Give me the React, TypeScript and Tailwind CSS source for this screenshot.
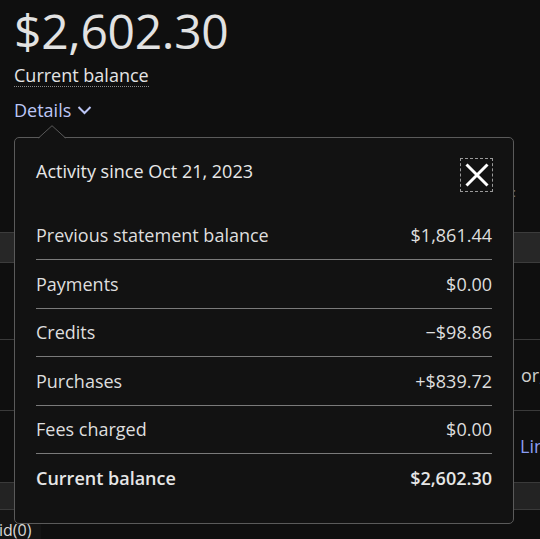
import React from "react";

const rows: { label: string; value: string; bold?: boolean }[] = [
  { label: "Previous statement balance", value: "$1,861.44" },
  { label: "Payments", value: "$0.00" },
  { label: "Credits", value: "\u2212$98.86" },
  { label: "Purchases", value: "+$839.72" },
  { label: "Fees charged", value: "$0.00" },
  { label: "Current balance", value: "$2,602.30", bold: true },
];

export default function App() {
  return (
    <div className="relative w-[540px] h-[539px] overflow-hidden bg-[#0f0f0f] font-['Open_Sans',sans-serif] text-[#e4e4e4]">
      {/* Background page */}
      <div className="h-[232px] flex flex-col pl-[14px]">
        <div className="pt-[3px] text-[48px] leading-[56px] text-[#e2e2e2] tracking-[-0.3px]">$2,602.30</div>
        <div className="mt-[5px] w-fit text-[18px] leading-[22px] border-b border-dotted border-[#8a8a8a]">Current balance</div>
        <div className="mt-[11px] flex items-center gap-[6px] text-[18px] leading-[24px] text-[#bcc6f6]">
          <span>Details</span>
          <svg width="15" height="10" viewBox="0 0 15 10" fill="none">
            <path d="M1.5 2 L7.5 8 L13.5 2" stroke="#bcc6f6" strokeWidth="2" />
          </svg>
        </div>
        <div className="mt-[65px] self-end pr-[24px] text-[12px] leading-[12px] text-[#777]">:</div>
      </div>
      <div className="h-[31px] bg-[#272727] border-y border-[#3c3c3c]" />
      <div className="h-[76px]" />
      <div className="h-[71px] border-t border-[#3a3a3a] flex items-center pl-[521px]">
        <span className="text-[18px] whitespace-nowrap text-[#cfcfcf]">or, more</span>
      </div>
      <div className="h-[72px] border-t border-[#3a3a3a] flex items-center pl-[520px]">
        <span className="text-[18px] whitespace-nowrap text-[#8a9df2]">Link</span>
      </div>
      <div className="h-[28px] bg-[#232323] border-y border-[#3a3a3a]" />
      <div className="flex">
        <div className="pt-[10px] text-[16px] leading-[20px] text-[#d8d8d8] pr-[10px] bg-[#141414] -ml-[1px]">id(0)</div>
      </div>

      {/* Popover */}
      <div className="absolute left-[14px] top-[137px] w-[500px] h-[387px] rounded-[5px] border border-[#5a5a5a] bg-[#121212] px-[21px] pt-[20px]">
        <svg className="absolute left-[23px] top-[-13px]" width="28" height="14" viewBox="0 0 28 14" fill="none">
          <polygon points="0,14 14,1 28,14" fill="#121212" />
          <path d="M0.5 13 L14 0.7 L27.5 13" stroke="#5a5a5a" strokeWidth="1" />
        </svg>
        <div className="flex items-start justify-between h-[34px]">
          <div className="mt-[1px] text-[18px] leading-[24px] text-[#e8e8e8]">Activity since Oct 21, 2023</div>
          <button className="w-[33px] h-[34px] -mr-[1px] border border-dashed border-[#9a9a9a] flex items-center justify-center">
            <svg width="24" height="24" viewBox="0 0 24 24" fill="none">
              <path d="M1.5 1.5 L22.5 22.5 M22.5 1.5 L1.5 22.5" stroke="#ffffff" strokeWidth="3" />
            </svg>
          </button>
        </div>
        <div className="mt-[19.5px] flex flex-col">
          {rows.map((r, i) => (
            <div
              key={r.label}
              className={
                "flex items-center justify-between h-[48.5px] text-[18px] leading-[24px] " +
                (i < rows.length - 1 ? "border-b border-[#7a7a7a] " : "") +
                (r.bold ? "font-semibold text-[#e6e6e6]" : "text-[#dedede]")
              }
            >
              <span>{r.label}</span>
              <span>{r.value}</span>
            </div>
          ))}
        </div>
      </div>
    </div>
  );
}
